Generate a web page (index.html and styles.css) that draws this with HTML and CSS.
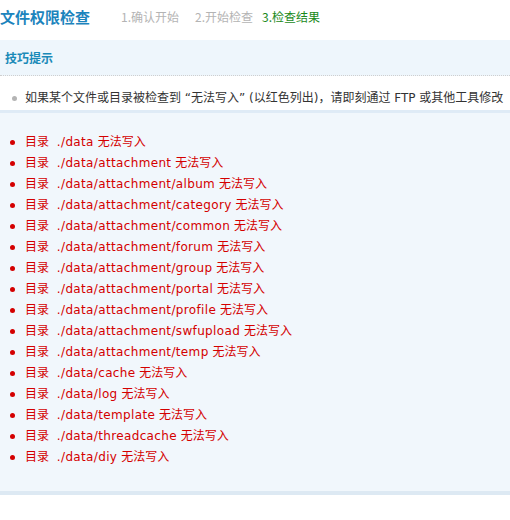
FILE: index.html
```html
<!DOCTYPE html>
<html lang="zh-CN">
<head>
<meta charset="utf-8">
<title>文件权限检查</title>
<link rel="stylesheet" href="styles.css">
</head>
<body>
<div class="page">
  <div class="header">
    <h1 class="title">文件权限检查</h1>
    <ul class="steps">
      <li class="step">1.确认开始</li>
      <li class="step second">2.开始检查</li>
      <li class="step current">3.检查结果</li>
    </ul>
  </div>
  <div class="tips">
    <div class="tips-head">技巧提示</div>
    <ul class="tips-body">
      <li>如果某个文件或目录被检查到 “无法写入” (以红色列出)，请即刻通过 FTP 或其他工具修改</li>
    </ul>
  </div>
  <div class="result">
    <ul class="errors">
      <li>目录 <span class="path">./data</span> 无法写入</li>
      <li>目录 <span class="path">./data/attachment</span> 无法写入</li>
      <li>目录 <span class="path">./data/attachment/album</span> 无法写入</li>
      <li>目录 <span class="path">./data/attachment/category</span> 无法写入</li>
      <li>目录 <span class="path">./data/attachment/common</span> 无法写入</li>
      <li>目录 <span class="path">./data/attachment/forum</span> 无法写入</li>
      <li>目录 <span class="path">./data/attachment/group</span> 无法写入</li>
      <li>目录 <span class="path">./data/attachment/portal</span> 无法写入</li>
      <li>目录 <span class="path">./data/attachment/profile</span> 无法写入</li>
      <li>目录 <span class="path">./data/attachment/swfupload</span> 无法写入</li>
      <li>目录 <span class="path">./data/attachment/temp</span> 无法写入</li>
      <li>目录 <span class="path">./data/cache</span> 无法写入</li>
      <li>目录 <span class="path">./data/log</span> 无法写入</li>
      <li>目录 <span class="path">./data/template</span> 无法写入</li>
      <li>目录 <span class="path">./data/threadcache</span> 无法写入</li>
      <li>目录 <span class="path">./data/diy</span> 无法写入</li>
    </ul>
  </div>
</div>
</body>
</html>
```

FILE: styles.css
```css
html, body {
  margin: 0;
  padding: 0;
  background: #fff;
  overflow: hidden;
}
body {
  font-family: "DejaVu Sans", "Noto Sans CJK SC", sans-serif;
  font-size: 12px;
  color: #333;
}
.page {
  width: 510px;
  white-space: nowrap;
}
.header {
  display: flex;
  align-items: center;
  height: 40px;
}
.title {
  margin: 0 0 8px 0;
  font-family: "Noto Sans CJK SC", sans-serif;
  font-size: 15px;
  font-weight: bold;
  color: #1c84bd;
  width: 121px;
}
.steps {
  display: flex;
  list-style: none;
  margin: 0 0 8px 0;
  padding: 0;
  font-family: "Noto Sans CJK SC", sans-serif;
  font-size: 12px;
  color: #b4b4b4;
}
.step.second {
  margin-left: 16px;
}
.step.current {
  margin-left: 9px;
  color: #1b8a1b;
}
.tips-head {
  background: #eef6fc;
  height: 35px;
  line-height: 35px;
  padding-left: 5px;
  font-family: "Noto Sans CJK SC", sans-serif;
  font-size: 12px;
  font-weight: bold;
  color: #1a8ab8;
  border-bottom: 1px dotted #cfcfcf;
}
.tips-body {
  list-style: none;
  margin: 0;
  padding: 12px 0 0 25px;
  height: 22px;
  border-bottom: 3px solid #dfebf6;
  font-family: "DejaVu Sans", "Noto Sans CJK SC", sans-serif;
  font-size: 12px;
  color: #333;
}
.tips-body li {
  position: relative;
  line-height: 20px;
}
.tips-body li::before {
  content: "";
  position: absolute;
  left: -13px;
  top: 8px;
  width: 5px;
  height: 5px;
  border-radius: 50%;
  background: #b4b4b4;
}
.result {
  background: #f1f7fc;
  padding: 19px 0 23px 0;
  border-bottom: 4px solid #dde9f3;
}
.errors {
  list-style: none;
  margin: 0;
  padding: 0 0 0 25px;
}
.errors li {
  position: relative;
  height: 21px;
  line-height: 21px;
  color: #d40000;
  font-family: "DejaVu Sans", "Noto Sans CJK SC", sans-serif;
  font-size: 12px;
}
.errors .path {
  margin-left: 4px;
  letter-spacing: 0.35px;
}
.errors li::before {
  content: "";
  position: absolute;
  left: -15px;
  top: 8px;
  width: 5px;
  height: 5px;
  border-radius: 50%;
  background: #d40000;
}
```
